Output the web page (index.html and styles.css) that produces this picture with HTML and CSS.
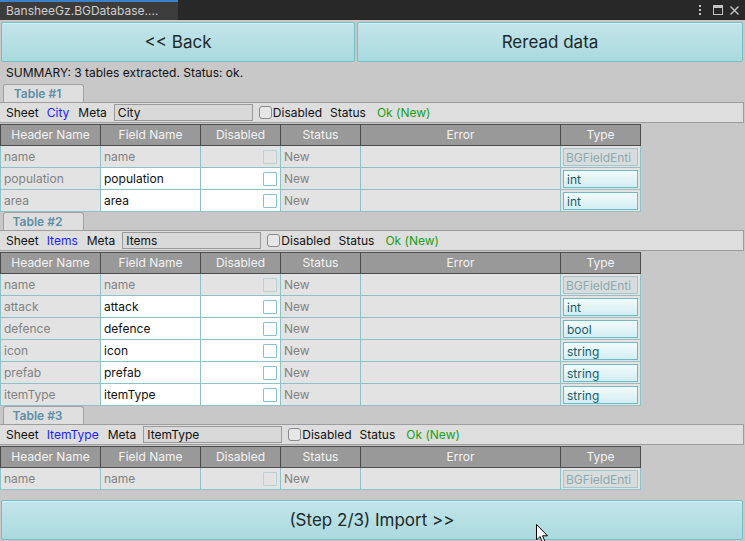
FILE: index.html
```html
<!DOCTYPE html>
<html>
<head>
<meta charset="utf-8">
<link rel="stylesheet" href="styles.css">
</head>
<body>
<div class="window">
  <div class="titlebar">
    <div class="tab">BansheeGz.BGDatabase....</div>
    <div class="win-icons">
      <svg class="ic-menu" width="4" height="12" viewBox="0 0 4 12"><rect x="1" y="1" width="2" height="2" fill="#c4c4c4"/><rect x="1" y="5" width="2" height="2" fill="#c4c4c4"/><rect x="1" y="9" width="2" height="2" fill="#c4c4c4"/></svg>
      <svg class="ic-max" width="10" height="10" viewBox="0 0 10 10"><rect x="0.5" y="0.5" width="9" height="9" fill="none" stroke="#c4c4c4"/><rect x="0" y="0" width="10" height="3" fill="#c4c4c4"/></svg>
      <svg class="ic-close" width="9" height="9" viewBox="0 0 9 9"><path d="M0.5 0.5 L8.5 8.5 M8.5 0.5 L0.5 8.5" stroke="#c4c4c4" stroke-width="1.4"/></svg>
    </div>
  </div>

  <div class="toolbar">
    <div class="btn btn-back">&lt;&lt; Back</div>
    <div class="btn btn-reread">Reread data</div>
  </div>

  <div class="summary">SUMMARY: 3 tables extracted. Status: ok.</div>

  <section class="block">
    <div class="tabrow"><div class="ttab">Table #1</div></div>
    <div class="sheetrow">
      <span class="lbl">Sheet</span><span class="sheetname">City</span><span class="lbl">Meta</span>
      <span class="meta-input">City</span>
      <span class="cb"></span><span class="lbl lbl-dis">Disabled</span><span class="lbl">Status</span><span class="ok">Ok (New)</span>
    </div>
    <div class="grid">
      <div class="hc">Header Name</div><div class="hc">Field Name</div><div class="hc">Disabled</div><div class="hc">Status</div><div class="hc">Error</div><div class="hc">Type</div>

      <div class="c c1">name</div><div class="c">name</div><div class="c dis"><span class="ccb off"></span></div><div class="c">New</div><div class="c"></div><div class="c ty"><span class="tbtn off">BGFieldEnti</span></div>

      <div class="c c1">population</div><div class="c w">population</div><div class="c dis w"><span class="ccb"></span></div><div class="c">New</div><div class="c"></div><div class="c ty"><span class="tbtn">int</span></div>

      <div class="c c1">area</div><div class="c w">area</div><div class="c dis w"><span class="ccb"></span></div><div class="c">New</div><div class="c"></div><div class="c ty"><span class="tbtn">int</span></div>
    </div>
  </section>

  <section class="block">
    <div class="tabrow"><div class="ttab">Table #2</div></div>
    <div class="sheetrow">
      <span class="lbl">Sheet</span><span class="sheetname">Items</span><span class="lbl">Meta</span>
      <span class="meta-input">Items</span>
      <span class="cb"></span><span class="lbl lbl-dis">Disabled</span><span class="lbl">Status</span><span class="ok">Ok (New)</span>
    </div>
    <div class="grid">
      <div class="hc">Header Name</div><div class="hc">Field Name</div><div class="hc">Disabled</div><div class="hc">Status</div><div class="hc">Error</div><div class="hc">Type</div>

      <div class="c c1">name</div><div class="c">name</div><div class="c dis"><span class="ccb off"></span></div><div class="c">New</div><div class="c"></div><div class="c ty"><span class="tbtn off">BGFieldEnti</span></div>

      <div class="c c1">attack</div><div class="c w">attack</div><div class="c dis w"><span class="ccb"></span></div><div class="c">New</div><div class="c"></div><div class="c ty"><span class="tbtn">int</span></div>

      <div class="c c1">defence</div><div class="c w">defence</div><div class="c dis w"><span class="ccb"></span></div><div class="c">New</div><div class="c"></div><div class="c ty"><span class="tbtn">bool</span></div>

      <div class="c c1">icon</div><div class="c w">icon</div><div class="c dis w"><span class="ccb"></span></div><div class="c">New</div><div class="c"></div><div class="c ty"><span class="tbtn">string</span></div>

      <div class="c c1">prefab</div><div class="c w">prefab</div><div class="c dis w"><span class="ccb"></span></div><div class="c">New</div><div class="c"></div><div class="c ty"><span class="tbtn">string</span></div>

      <div class="c c1">itemType</div><div class="c w">itemType</div><div class="c dis w"><span class="ccb"></span></div><div class="c">New</div><div class="c"></div><div class="c ty"><span class="tbtn">string</span></div>
    </div>
  </section>

  <section class="block">
    <div class="tabrow"><div class="ttab">Table #3</div></div>
    <div class="sheetrow">
      <span class="lbl">Sheet</span><span class="sheetname">ItemType</span><span class="lbl">Meta</span>
      <span class="meta-input">ItemType</span>
      <span class="cb"></span><span class="lbl lbl-dis">Disabled</span><span class="lbl">Status</span><span class="ok">Ok (New)</span>
    </div>
    <div class="grid">
      <div class="hc">Header Name</div><div class="hc">Field Name</div><div class="hc">Disabled</div><div class="hc">Status</div><div class="hc">Error</div><div class="hc">Type</div>

      <div class="c c1">name</div><div class="c">name</div><div class="c dis"><span class="ccb off"></span></div><div class="c">New</div><div class="c"></div><div class="c ty"><span class="tbtn off">BGFieldEnti</span></div>
    </div>
  </section>

  <div class="footer">
    <div class="btn btn-import">(Step 2/3) Import &gt;&gt;</div>
  </div>

  <svg class="cursor" width="13" height="20" viewBox="0 0 13 20"><path d="M0.5 0.5 L0.5 16 L4 12.5 L6.5 18.5 L9 17.5 L6.5 11.8 L11.5 11.8 Z" fill="#ffffff" stroke="#000000" stroke-width="1" stroke-linejoin="miter"/></svg>
</div>
</body>
</html>
```

FILE: styles.css
```css
html, body {
  margin: 0;
  padding: 0;
}
body {
  width: 745px;
  height: 541px;
  overflow: hidden;
  background: #c8c8c8;
  font-family: Inter, "Noto Sans", "DejaVu Sans", sans-serif;
  font-size: 12px;
  color: #111;
}
.window {
  position: relative;
  width: 745px;
  height: 541px;
}
.titlebar {
  height: 20px;
  background: #282828;
  display: flex;
  align-items: stretch;
  justify-content: space-between;
}
.tab {
  width: 178px;
  padding-left: 6px;
  background: #3c3c3c;
  border-top: 2px solid #3f7fc4;
  box-sizing: border-box;
  color: #cfcfcf;
  font-size: 12px;
  line-height: 17px;
  white-space: nowrap;
}
.win-icons {
  display: flex;
  align-items: center;
  padding-right: 6px;
}
.ic-menu { margin-right: 11px; }
.ic-max { margin-right: 7px; }
.toolbar {
  display: flex;
  gap: 2px;
  margin: 2px 2px 0 1px;
  height: 40px;
}
.btn {
  box-sizing: border-box;
  border: 1px solid #74c0c9;
  border-radius: 2px;
  background: linear-gradient(#c3e5ea, #aadade);
  box-shadow: inset 0 1px 0 #d6eef1;
  display: flex;
  align-items: center;
  justify-content: center;
  font-size: 17px;
  color: #20282a;
}
.btn-back { width: 354px; }
.btn-reread { flex: 1; }
.summary {
  height: 22px;
  line-height: 22px;
  padding-left: 6px;
  color: #111;
}
.tabrow {
  height: 18px;
  display: flex;
  align-items: flex-end;
  padding-left: 3px;
}
.ttab {
  box-sizing: border-box;
  width: 81px;
  height: 18px;
  background: #dedede;
  border: 1px solid #a2a2a2;
  border-bottom: none;
  border-radius: 3px 3px 0 0;
  color: #5f8ea7;
  font-weight: 600;
  text-align: center;
  line-height: 17px;
  padding-right: 12px;
}
.sheetrow {
  box-sizing: border-box;
  height: 21px;
  margin-right: 1px;
  background: #dedede;
  border: 1px solid #9d9d9d;
  border-left: none;
  display: flex;
  align-items: center;
  padding-left: 6px;
  white-space: nowrap;
}
.lbl { margin-right: 8px; }
.sheetname { color: #1d1dff; margin-right: 9px; }
.meta-input {
  box-sizing: border-box;
  width: 139px;
  height: 17px;
  line-height: 15px;
  background: #d9d9d9;
  border: 1px solid #9a9a9a;
  padding-left: 3px;
  margin-left: -1px;
  margin-right: 6px;
}
.cb {
  box-sizing: border-box;
  width: 13px;
  height: 13px;
  border: 1px solid #8a8a8a;
  border-radius: 3px;
  background: #e6e6e6;
  margin-right: 1px;
}
.lbl-dis { margin-right: 8px; }
.ok { color: #16a016; margin-left: 3px; }
.grid {
  margin-top: 1px;
  display: grid;
  grid-template-columns: 101px 100px 80px 80px 200px 80px;
  width: 641px;
}
.hc {
  box-sizing: border-box;
  height: 22px;
  background: #999999;
  color: #f3f3f3;
  border-top: 1px solid #4c4c4c;
  border-bottom: 1px solid #4c4c4c;
  border-right: 1px solid #4c4c4c;
  text-align: center;
  line-height: 20px;
}
.hc:first-child { border-left: 1px solid #4c4c4c; }
.c {
  box-sizing: border-box;
  height: 22px;
  background: #e3e3e3;
  border-right: 1px solid #8fc1c9;
  border-bottom: 1px solid #8fc1c9;
  padding-left: 3px;
  line-height: 22px;
  color: #828282;
  white-space: nowrap;
  overflow: hidden;
}
.c1 { border-left: 1px solid #8fc1c9; padding-left: 3px; }
.c.w { background: #ffffff; color: #111; }
.dis {
  display: flex;
  align-items: center;
  justify-content: flex-end;
  padding-right: 3px;
}
.ccb {
  box-sizing: border-box;
  width: 14px;
  height: 14px;
  border: 1px solid #88c1ca;
  background: #ffffff;
  border-radius: 1px;
}
.ccb.off {
  border-color: #b8d2d6;
  background: #e3e3e3;
}
.ty {
  padding: 2px 0 0 2px;
}
.tbtn {
  display: block;
  box-sizing: border-box;
  width: 75px;
  height: 18px;
  border: 1px solid #72b8c2;
  background: linear-gradient(#f3fbfc, #d3eef2);
  color: #1c5b67;
  line-height: 17px;
  padding-left: 3px;
  overflow: hidden;
}
.tbtn.off {
  border-color: #aac5c9;
  background: #d9dcdc;
  color: #8aaab0;
  padding-left: 2px;
}
.footer {
  margin-top: 10px;
  height: 40px;
  display: flex;
  padding: 0 2px 0 1px;
}
.btn-import { flex: 1; }
.cursor {
  position: absolute;
  left: 536px;
  top: 524px;
}
```
